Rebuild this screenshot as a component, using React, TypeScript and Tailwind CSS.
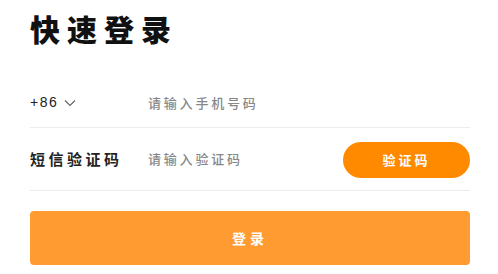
import React from "react";

const cjk = { fontFamily: '"Noto Sans CJK SC", "Noto Sans", sans-serif' };

export default function App() {
  return (
    <div className="w-[498px] h-[274px] bg-white pl-[30px] pr-[28px] pt-[10px]" style={cjk}>
      <h1 className="text-[30px] leading-[36px] font-black tracking-[7px] text-[#111]">快速登录</h1>

      <div className="mt-[32px] h-[50px] flex items-center border-b border-[#ececec]">
        <div className="w-[118px] flex items-center">
          <span className="text-[14px] tracking-[1.5px] text-[#222]" style={{ fontFamily: '"Liberation Sans", sans-serif' }}>
            +86
          </span>
          <svg className="ml-[6px]" width="12" height="8" viewBox="0 0 12 8" fill="none">
            <polyline points="1,1.5 6,6.5 11,1.5" stroke="#666" strokeWidth="1.2" />
          </svg>
        </div>
        <input
          type="text"
          placeholder="请输入手机号码"
          className="flex-1 bg-transparent outline-none text-[13px] tracking-[2.8px] placeholder:text-[#888] font-medium"
        />
      </div>

      <div className="h-[63px] flex items-center border-b border-[#ececec]">
        <div className="w-[118px] text-[15px] font-bold tracking-[3.5px] text-[#222]">短信验证码</div>
        <input
          type="text"
          placeholder="请输入验证码"
          className="flex-1 min-w-0 bg-transparent outline-none text-[13px] tracking-[2.8px] placeholder:text-[#888] font-medium"
        />
        <button className="w-[127px] h-[36px] mt-[2px] rounded-full bg-[#ff8a00] text-white text-[13px] font-bold tracking-[3px]">
          验证码
        </button>
      </div>

      <button className="mt-[20px] w-full h-[54px] rounded-[4px] bg-[#ff9b30] text-white text-[14px] font-bold tracking-[4px]">
        登录
      </button>
    </div>
  );
}
